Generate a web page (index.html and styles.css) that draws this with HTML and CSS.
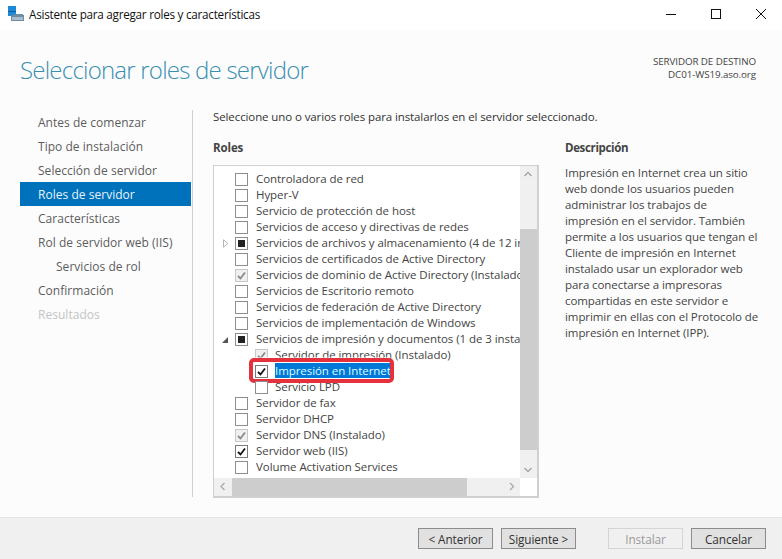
FILE: index.html
```html
<!DOCTYPE html>
<html lang="es">
<head>
<meta charset="utf-8">
<title>Asistente para agregar roles y características</title>
<link rel="stylesheet" href="styles.css">
</head>
<body>
<div class="window">
  <header class="titlebar">
    <svg class="app-icon" width="17" height="16" viewBox="0 0 17 16"><rect x="0" y="0" width="8" height="5" fill="#1e88d8"/><rect x="0" y="6" width="8" height="4" fill="#1e88d8"/><rect x="0" y="5" width="8" height="1" fill="#0f5f9e"/><path d="M3 9h3l1-1h8v1h1v6H3z" fill="#6f8ca3"/><rect x="4" y="11" width="11" height="3" fill="#a9bdcc"/></svg>
    <span class="title">Asistente para agregar roles y características</span>
    <div class="controls">
      <svg width="12" height="12" viewBox="0 0 12 12"><path d="M1 6.500h10" stroke="#111" fill="none"/></svg>
      <svg width="12" height="12" viewBox="0 0 12 12"><rect x="1.500" y="1.500" width="9" height="9" stroke="#111" fill="none"/></svg>
      <svg width="12" height="12" viewBox="0 0 12 12"><path d="M1 1l10 10M11 1L1 11" stroke="#111" fill="none"/></svg>
    </div>
  </header>

  <main class="content">
    <div class="page-head">
      <h1>Seleccionar roles de servidor</h1>
      <div class="target">SERVIDOR DE DESTINO<br>DC01-WS19.aso.org</div>
    </div>
    <div class="columns">
      <nav class="steps">
        <div class="step">Antes de comenzar</div>
        <div class="step">Tipo de instalación</div>
        <div class="step">Selección de servidor</div>
        <div class="step active">Roles de servidor</div>
        <div class="step">Características</div>
        <div class="step">Rol de servidor web (IIS)</div>
        <div class="step sub">Servicios de rol</div>
        <div class="step">Confirmación</div>
        <div class="step off">Resultados</div>
      </nav>
      <section class="pane">
        <p class="intro">Seleccione uno o varios roles para instalarlos en el servidor seleccionado.</p>
        <div class="split">
          <div class="roles">
            <h2>Roles</h2>
            <div class="listbox">
              <div class="list-main">
                <ul class="tree">
                  <li class="row"><i class="box"></i><span>Controladora de red</span></li>
                  <li class="row"><i class="box"></i><span>Hyper-V</span></li>
                  <li class="row"><i class="box"></i><span>Servicio de protección de host</span></li>
                  <li class="row"><i class="box"></i><span>Servicios de acceso y directivas de redes</span></li>
                  <li class="row"><svg class="exp-closed" width="6" height="9" viewBox="0 0 6 9"><path d="M.5.800L5 4.500.5 8.200z" fill="#fff" stroke="#b4b4b4"/></svg><i class="box part"></i><span>Servicios de archivos y almacenamiento (4 de 12 instalados)</span></li>
                  <li class="row"><i class="box"></i><span>Servicios de certificados de Active Directory</span></li>
                  <li class="row"><i class="box dim"><svg viewBox="0 0 11 11"><path d="M2 6l2.500 2.500L9 2.500" /></svg></i><span>Servicios de dominio de Active Directory (Instalado)</span></li>
                  <li class="row"><i class="box"></i><span>Servicios de Escritorio remoto</span></li>
                  <li class="row"><i class="box"></i><span>Servicios de federación de Active Directory</span></li>
                  <li class="row"><i class="box"></i><span>Servicios de implementación de Windows</span></li>
                  <li class="row"><b class="exp-open"></b><i class="box part"></i><span>Servicios de impresión y documentos (1 de 3 instalados)</span></li>
                  <li class="row child"><i class="box dim"><svg viewBox="0 0 11 11"><path d="M2 6l2.500 2.500L9 2.500" /></svg></i><span>Servidor de impresión (Instalado)</span></li>
                  <li class="row child"><i class="box on"><svg viewBox="0 0 11 11"><path d="M2 6l2.500 2.500L9 2.500" /></svg></i><span class="sel">Impresión en Internet</span><div class="ring"></div></li>
                  <li class="row child"><i class="box"></i><span>Servicio LPD</span></li>
                  <li class="row"><i class="box"></i><span>Servidor de fax</span></li>
                  <li class="row"><i class="box"></i><span>Servidor DHCP</span></li>
                  <li class="row"><i class="box dim"><svg viewBox="0 0 11 11"><path d="M2 6l2.500 2.500L9 2.500" /></svg></i><span>Servidor DNS (Instalado)</span></li>
                  <li class="row"><i class="box on"><svg viewBox="0 0 11 11"><path d="M2 6l2.500 2.500L9 2.500" /></svg></i><span>Servidor web (IIS)</span></li>
                  <li class="row"><i class="box"></i><span>Volume Activation Services</span></li>
                </ul>
                <div class="vbar">
                  <svg class="arrow" width="16" height="17" viewBox="0 0 16 17"><path d="M4.500 10L8 6.500l3.500 3.500" stroke="#a6a6a6" stroke-width="1.500" fill="none"/></svg>
                  <div class="vtrack-top"></div>
                  <div class="vthumb"></div>
                  <div class="vtrack-bot"></div>
                  <svg class="arrow" width="16" height="17" viewBox="0 0 16 17"><path d="M4.500 7L8 10.500 11.500 7" stroke="#a6a6a6" stroke-width="1.500" fill="none"/></svg>
                </div>
              </div>
              <div class="hbar">
                <svg class="arrow" width="18" height="17" viewBox="0 0 18 17"><path d="M10.500 5L7 8.500l3.500 3.500" stroke="#a6a6a6" stroke-width="1.200" fill="none"/></svg>
                <div class="hthumb"></div>
                <div class="htrack"></div>
                <svg class="arrow" width="18" height="17" viewBox="0 0 18 17"><path d="M8 5l3.500 3.500L8 12" stroke="#a6a6a6" stroke-width="1.200" fill="none"/></svg>
                <div class="corner"></div>
              </div>
            </div>
          </div>
          <aside class="desc">
            <h2>Descripción</h2>
            <p>Impresión en Internet crea un sitio web donde los usuarios pueden administrar los trabajos de impresión en el servidor. También permite a los usuarios que tengan el Cliente de impresión en Internet instalado usar un explorador web para conectarse a impresoras compartidas en este servidor e imprimir en ellas con el Protocolo de impresión en Internet (IPP).</p>
          </aside>
        </div>
      </section>
    </div>
  </main>

  <footer class="footer">
    <div class="btn-group">
      <button class="btn">&lt; Anterior</button>
      <button class="btn">Siguiente &gt;</button>
    </div>
    <div class="btn-group">
      <button class="btn" disabled>Instalar</button>
      <button class="btn">Cancelar</button>
    </div>
  </footer>
</div>
</body>
</html>
```
FILE: styles.css
```css
* { box-sizing: border-box; }
html, body { margin: 0; padding: 0; }
body { width: 782px; height: 559px; overflow: hidden; font-family: "Open Sans", "Noto Sans", sans-serif; font-size: 12px; color: #333; }
.window { display: flex; flex-direction: column; height: 559px; background: #fff; }

.titlebar { height: 30px; flex: none; display: flex; align-items: center; padding: 0 0 2px 8px; background: #fff; }
.app-icon { flex: none; margin-right: 4px; }
.title { color: #111; font-size: 11.700px; letter-spacing: -0.250px; }
.controls { margin-left: auto; display: flex; gap: 33px; padding-right: 15px; }

.content { flex: 1; min-height: 0; background: #fcfcfc; display: flex; flex-direction: column; }
.page-head { height: 80px; flex: none; display: flex; justify-content: space-between; padding: 0 26px 0 20px; }
h1 { margin: 23px 0 0; font-size: 24px; font-weight: 300; line-height: 34px; color: #3a8fb0; letter-spacing: -0.780px; }
.target { margin-top: 25px; text-align: right; font-size: 9.800px; line-height: 13px; color: #444; letter-spacing: -0.100px; }

.columns { flex: 1; display: flex; min-height: 0; padding-bottom: 20px; }
.steps { width: 173px; margin-left: 20px; flex: none; border-right: 1px solid #d0d0d0; }
.step { height: 24px; line-height: 26px; margin-right: 1px; padding-left: 18px; color: #5c5c5c; font-size: 12px; letter-spacing: 0.030px; }
.step.sub { padding-left: 36px; }
.step.active { background: #0072bc; color: #e8f2f9; }
.step.off { color: #c4c4c4; }

.pane { flex: 1; min-width: 0; padding: 0 16px 0 20px; margin-top: -1px; }
.intro { margin: 0; line-height: 16px; height: 31px; font-size: 11.500px; letter-spacing: -0.100px; color: #333; }
.split { display: flex; gap: 26px; }
.roles { width: 326px; flex: none; }
h2 { margin: 0; font-size: 11.500px; font-weight: 700; line-height: 16px; color: #444; height: 25px; letter-spacing: -0.100px; }

.listbox { height: 333px; border: 1px solid #d0d0d0; border-width: 1px 2px 2px 1px; background: #fff; display: flex; flex-direction: column; }
.list-main { flex: 1; min-height: 0; display: flex; }
.tree { list-style: none; margin: 0; padding: 5px 0 0; flex: 1; min-width: 0; overflow: hidden; }
.row { position: relative; height: 16px; display: flex; align-items: center; padding-left: 21px; white-space: nowrap; font-size: 11.500px; letter-spacing: -0.060px; color: #444; }
.row.child { padding-left: 41px; }
.row > span { margin: 0 0 2px 8px; line-height: 15px; }
.row.child > span { margin-left: 7px; }
.box { display: block; position: relative; flex: none; width: 13px; height: 13px; border: 1px solid #8e8e8e; background: #fff; }
.box svg { position: absolute; left: 0; top: 0; width: 11px; height: 11px; fill: none; stroke-width: 1.800px; }
.box.on svg { stroke: #111; }
.box.on { border-color: #7a7a7a; }
.box.dim { border-color: #c8c8c8; background: #f0f0f0; }
.box.dim svg { stroke: #8a8a8a; }
.box.part::after { content: ""; position: absolute; left: 2px; top: 2px; width: 7px; height: 7px; background: #222; }
.exp-closed { position: absolute; left: 9px; top: 4px; }
.exp-open { position: absolute; left: 8px; top: 6px; width: 0; height: 0; border-right: 6px solid #555; border-top: 6px solid transparent; }
.sel { background: #0078d7; color: #dff; }
.ring { position: absolute; left: 35px; top: -5px; width: 145px; height: 25px; border: 4px solid #e5313c; border-radius: 5px; pointer-events: none; box-shadow: 0 0 0 1px rgba(255,255,255,.5); }

.vbar { width: 17px; flex: none; background: #f0f0f0; display: flex; flex-direction: column; }
.arrow { flex: none; display: block; }
.vtrack-top { height: 46px; flex: none; }
.vthumb { height: 221px; flex: none; background: #cdcdcd; }
.vtrack-bot { flex: 1; }
.hbar { height: 18px; flex: none; background: #f0f0f0; display: flex; }
.hthumb { width: 235px; flex: none; background: #cdcdcd; }
.htrack { flex: 1; }
.corner { width: 17px; flex: none; background: #fff; }

.desc { width: 197px; flex: none; }
.desc h2 { letter-spacing: -0.350px; }
.desc p { margin: 0; font-size: 11.500px; line-height: 16px; color: #444; letter-spacing: -0.080px; }

.footer { height: 42px; flex: none; background: #f0f0f0; border-top: 1px solid #e4e4e4; display: flex; justify-content: flex-end; gap: 32px; padding: 10px 16px 0 0; }
.btn-group { display: flex; gap: 8px; }
.btn { width: 75px; height: 21px; padding: 0; background: #e1e1e1; border: 1px solid #8c8c8c; font: inherit; font-size: 11.800px; line-height: 18px; color: #333; letter-spacing: -0.100px; }
.btn:disabled { background: #f0f0f0; border-color: #d4d4d4; color: #9a9a9a; }
```
